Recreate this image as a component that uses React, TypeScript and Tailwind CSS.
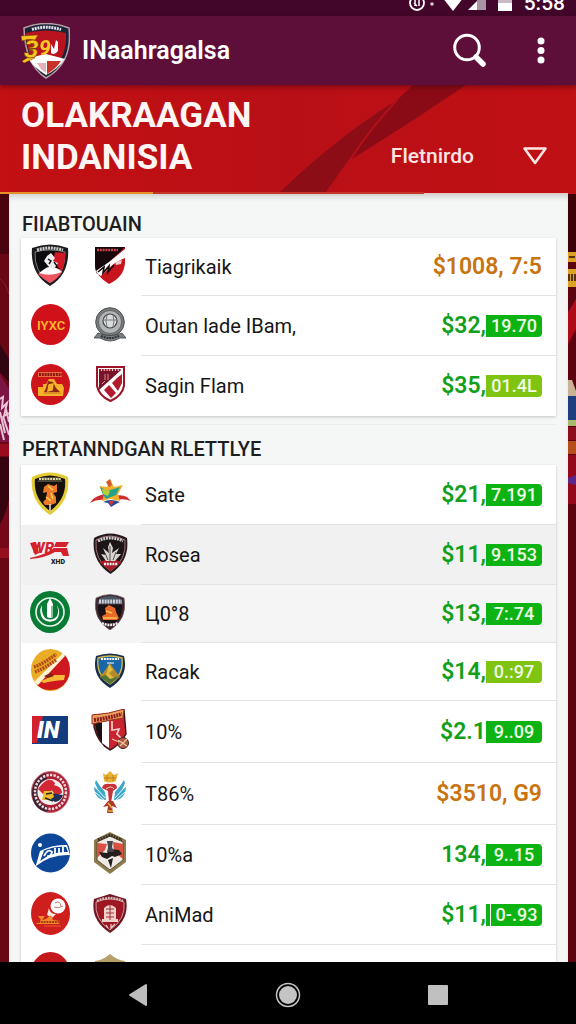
import type { ReactNode } from "react";

type Tone = "green" | "lime" | "orange";

type Row = {
  name: string;
  price: string;
  badge?: string;
  tone: Tone;
  bar?: boolean;
  height: string;
  shade?: string;
  left: ReactNode;
  right: ReactNode;
};

function Icon({ w, h, children }: { w: number; h: number; children: ReactNode }) {
  return (
    <svg width={w} height={h} viewBox={`0 0 ${w} ${h}`} className="shrink-0" aria-hidden="true">
      {children}
    </svg>
  );
}

function Lettering({ d, color, size = 3 }: { d: string; color: string; size?: number }) {
  return <path d={d} fill="none" stroke={color} strokeWidth={size} strokeDasharray="2 0.8" />;
}

const svgFont = "Roboto, sans-serif";

const fox = (
  <Icon w={38} h={42}>
    <path d="M1 4Q19-3 37 4Q39 30 19 42Q-1 30 1 4Z" fill="#1b1b1f" />
    <path d="M4 8Q19 4 34 8Q35 28 19 39Q3 28 4 8Z" fill="#0b0b0d" stroke="#aaa" strokeWidth=".7" />
    <path d="M24 8L34 9Q34 20 31 27L22 18Z" fill="#d01824" />
    <path d="M7 30Q12 26 17 25L25 24Q31 25 31 28Q27 35 19 39Q12 35 7 30Z" fill="#ef5560" />
    <path d="M12 26Q19 20 27 25L31 28Q19 33 8 29Z" fill="#fff" />
    <path d="M16 12L20 9L24 14L22 17L27 19L23 25L18 23L13 17Z" fill="#eee" />
    <path d="M17 15L20 17L18 20M23 18L26 22" stroke="#111" fill="none" strokeWidth="1.4" />
    <Lettering d="M6 6Q19 2 32 6" color="#ccc" size={3} />
  </Icon>
);

const slash = (
  <Icon w={30} h={38}>
    <path d="M0 1H30V17Q29 31 14 38Q1 30 0 20Z" fill="#c8141c" />
    <path d="M0 1H30L2 28Q0 24 0 20Z" fill="#17090b" />
    <path d="M30 3V12Q20 16 14 22L6 30Q2 28 1 25L14 16Z" fill="#fff" />
    <path d="M3 26L9 21L8 27L14 20L13 26L19 19" stroke="#17090b" strokeWidth="1.6" fill="none" />
    <path d="M20 16L27 14L26 18L21 19Z" fill="#f5c9cb" />
    <Lettering d="M2 4H23" color="#c9444b" size={2.5} />
  </Icon>
);

const redDisc = (
  <Icon w={39} h={41}>
    <ellipse cx="19.5" cy="20.5" rx="19.5" ry="20.5" fill="#d0111a" />
    <text x="6" y="26" fontFamily={svgFont} fontSize="13" fontWeight="600" fill="#fbb72a">IYXC</text>
  </Icon>
);

const globe = (
  <Icon w={32} h={35}>
    <circle cx="16" cy="15" r="14.3" fill="#777b7d" stroke="#4d5153" strokeWidth="1" />
    <circle cx="16" cy="15" r="11.5" fill="#b2b5b6" stroke="#555" strokeWidth=".8" />
    <circle cx="16" cy="14" r="7" fill="#d9dcdd" stroke="#444" strokeWidth="1.2" />
    <path d="M9 13H23M13 8Q11 14 13 20M19 8Q21 14 19 20" stroke="#777" strokeWidth="1" fill="none" />
    <path d="M0 31L4 26Q16 31 28 26L32 31L26 31Q16 37 6 31Z" fill="#7b7f81" stroke="#3d4042" strokeWidth=".8" />
    <Lettering d="M7 29Q16 33 25 29" color="#2e3031" size={2} />
  </Icon>
);

const temple = (
  <Icon w={39} h={41}>
    <ellipse cx="19.5" cy="20.5" rx="19.5" ry="20.5" fill="#cd141b" />
    <path d="M7 8H31V13H7Z" fill="#e8703d" />
    <Lettering d="M8 10.5H31" color="#8c1712" size={3} />
    <path d="M7 23H12V20H15L18 15H23L26 20H31L33 24L32 32H7Z" fill="#f6b12a" />
    <path d="M17 17L22 18L25 24L31 30H12L15 24Z" fill="#8d2816" />
    <path d="M8 26H13M26 24H31M9 29H31M18 21L22 20L21 26L17 27Z" stroke="#f7b12b" strokeWidth="1.5" fill="#f7b12b" />
  </Icon>
);

const stripes = (
  <Icon w={29} h={36}>
    <path d="M1 1H28V20Q26 30 14.500 35Q3 30 1 20Z" fill="#fff" stroke="#9d1527" strokeWidth="2" />
    <path d="M3 5H24L3 24Z" fill="#77142a" />
    <path d="M21 12L26 8V17L22 25L16 17ZM13 19L20 27L15 32L8 24Z" fill="#b21b2c" />
    <path d="M9 8V14M12 8V14M6 18L9 15" stroke="#d98b98" strokeWidth="1" />
    <Lettering d="M3 4H25" color="#9d1527" size={2} />
  </Icon>
);

const goldShield = (
  <Icon w={38} h={43}>
    <path d="M1 5Q19-4 37 5Q40 29 19 43Q-2 29 1 5Z" fill="#e3cc35" />
    <path d="M4 7Q19 0 34 7Q36 27 19 39Q2 27 4 7Z" fill="#15100d" />
    <path d="M6 10L10 5H28L32 10Z" fill="#4a4635" />
    <Lettering d="M8 7H30" color="#ddd5a0" size={2} />
    <path d="M13 15L17 12L23 14L26 12V20L22 21L25 25V31L20 33H14L12 30L15 27L16 20L12 21Z" fill="#ed7a2b" />
    <path d="M17 14L22 18M15 25L20 29M20 21L22 27" stroke="#f8d153" strokeWidth="1.6" />
    <path d="M19 32V39" stroke="#ddd" strokeWidth="1.6" />
  </Icon>
);

const star = (
  <Icon w={41} h={28}>
    <path d="M0 24L3 20Q10 15 18 15L14 21Q7 20 0 24ZM41 22L37 18Q31 15 25 17L27 21Q34 19 41 22Z" fill="#cf2b31" />
    <path d="M20 0L24 8L33 6L28 15L30 22L20 20L12 22L14 15L9 7L17 8Z" fill="#f1b02c" />
    <path d="M10 8L17 12L30 8L26 16L16 20L13 16Z" fill="#27a28a" />
    <path d="M12 10L20 12L18 17L13 15Z" fill="#bccc33" />
    <path d="M16 3L20 0L22 6L19 8Z" fill="#d6542c" />
    <path d="M13 23Q20 19 30 23L26 25L21 28L18 24Z" fill="#2b4b98" />
    <path d="M19 22L24 22L21 27Z" fill="#d4333a" />
  </Icon>
);

const wr = (
  <Icon w={40} h={28}>
    <text x="2" y="14" fontFamily={svgFont} fontSize="15" fontWeight="900" fontStyle="italic" fill="#d5212c">WR</text>
    <path d="M0 19Q15 16 24 9L37 9L39 17L33 17L31 13L25 13Q15 19 0 20Z" fill="#d5212c" />
    <path d="M0 4L6 3L9 14L5 16ZM26 3H39L36 8H24Z" fill="#d5212c" />
    <text x="21" y="25" fontFamily={svgFont} fontSize="7" fontWeight="900" fill="#1c1c1c">XHD</text>
  </Icon>
);

const leafShield = (
  <Icon w={35} h={41}>
    <path d="M1 5Q17-4 34 5Q37 28 17.500 41Q-2 28 1 5Z" fill="#241a1c" />
    <path d="M3 7Q17-1 32 7Q34 27 17.500 38Q1 27 3 7Z" fill="#1d1618" stroke="#a77077" strokeWidth="1" />
    <path d="M6 29Q17 24 29 29L17.500 38Z" fill="#a91c27" />
    <path d="M17 9L20 15L19 20L26 15L23 21L28 21L22 28H13L8 21L13 22L10 15L16 20L15 14Z" fill="#d9d6d0" />
    <path d="M17 13V28M12 20L15 27M23 19L20 27" stroke="#554d4c" strokeWidth="1" />
    <Lettering d="M5 8Q17 2 30 8" color="#ccc" size={3} />
    <Lettering d="M11 31H25" color="#eee" size={2.5} />
  </Icon>
);

const greenDisc = (
  <Icon w={40} h={42}>
    <ellipse cx="20" cy="21" rx="20" ry="21" fill="#087b35" />
    <circle cx="20" cy="21" r="14" fill="none" stroke="#e9f5ec" strokeWidth="1.6" />
    <path d="M12 14Q8 21 13 28Q19 33 26 29Q32 23 27 14Q30 24 25 27Q20 30 15 27Q11 22 12 14Z" fill="#fff" />
    <path d="M20 7L23 13V26Q20 28 17 26V13Z" fill="#fff" />
    <path d="M22 15V26" stroke="#2f9b57" strokeWidth="1.2" />
  </Icon>
);

const darkCrest = (
  <Icon w={30} h={36}>
    <path d="M1 4Q15-3 29 4Q33 25 15 36Q-3 25 1 4Z" fill="#3b252c" stroke="#795d64" strokeWidth=".7" />
    <path d="M3 11H27Q28 22 20 29H10Q2 22 3 11Z" fill="#181115" />
    <path d="M5 4Q15 0 25 4L28 10H2Z" fill="#4b5563" />
    <Lettering d="M4 7.500H27" color="#cbd0d7" size={4} />
    <path d="M10 14L14 11L20 14L21 18L24 24L22 26H8L7 22L11 20Z" fill="#e96a28" />
    <path d="M11 17L17 19M8 24H22" stroke="#f9c14e" strokeWidth="1.5" />
    <Lettering d="M7 29Q15 33 23 29" color="#eee" size={2.5} />
  </Icon>
);

const splitDisc = (
  <Icon w={39} h={42}>
    <ellipse cx="19.500" cy="21" rx="19.500" ry="21" fill="#e9ad26" />
    <path d="M6 36L34 6Q41 15 38 27Q33 41 19 41Q11 41 6 36Z" fill="#cf1720" />
    <path d="M3 33L32 4L34 7L7 36Z" fill="#fff4d2" />
    <Lettering d="M3 18Q14 14 25 5M4 23Q14 19 25 11" color="#b44b1b" size={3.5} />
    <path d="M9 32Q17 30 20 26H34L33 31Q20 32 13 34Z" fill="#f8ba36" />
    <path d="M13 27L20 24L23 27L17 29Z" fill="#7c2215" />
  </Icon>
);

const mountain = (
  <Icon w={30} h={35}>
    <path d="M1 3Q15-2 29 3Q34 24 15 35Q-4 24 1 3Z" fill="#17304d" />
    <path d="M3 5Q15 1 27 5Q29 22 15 31Q1 22 3 5Z" fill="#1967a8" stroke="#d5b54c" strokeWidth="1.4" />
    <path d="M15 10L19 16L25 24L15 31L5 24L11 16Z" fill="#b58a2a" />
    <path d="M14 11L18 17L14 20L20 26L9 27L12 19Z" fill="#e0bd3e" />
    <path d="M5 24L11 22L15 26L25 23L15 31Z" fill="#547435" />
    <Lettering d="M6 6H24" color="#fff" size={2} />
    <path d="M12 10H19" stroke="#fff" strokeWidth="1" />
  </Icon>
);

const inLogo = (
  <Icon w={36} h={28}>
    <path d="M0 0H36V28H0Z" fill="#123c7c" />
    <path d="M0 0H11L5 27H0Z" fill="#d3202d" />
    <text x="5" y="22" fontFamily={svgFont} fontSize="23" fontWeight="900" fontStyle="italic" fill="#fff">IN</text>
  </Icon>
);

const bannerShield = (
  <Icon w={38} h={42}>
    <path d="M3 6Q19 6 33 1L35 25Q29 36 19 41Q7 34 3 18Z" fill="#c8232e" stroke="#35151a" strokeWidth="1.4" />
    <path d="M4 14H11V33Q5 26 4 14Z" fill="#181214" />
    <path d="M11 13L18 12V39L11 34Z" fill="#fff" />
    <path d="M1 6Q18 5 33 0L32 9Q18 11 1 15Z" fill="#eaa15c" stroke="#9f2e22" strokeWidth="1" />
    <Lettering d="M3 11Q18 9 31 5" color="#8e1d20" size={4} />
    <path d="M21 12V22M22 21L28 20L26 25L30 29" stroke="#f1d1c9" strokeWidth="1.700" fill="none" />
    <circle cx="32" cy="34" r="5.500" fill="#a85c42" stroke="#4a201b" />
    <path d="M27 31L36 37M36 30L29 37M21 30L28 33" stroke="#efc6a1" strokeWidth="1.2" />
  </Icon>
);

const ringDisc = (
  <Icon w={39} h={42}>
    <ellipse cx="19.500" cy="21" rx="19" ry="20.500" fill="#a92035" stroke="#c9686f" strokeWidth="1" />
    <path d="M1 21Q2 7 14 2L16 8Q6 12 6 21Q6 33 17 36L16 41Q1 38 1 21Z" fill="#3c2433" />
    <ellipse cx="19.500" cy="21" rx="15.500" ry="17" fill="none" stroke="#f3d9dc" strokeWidth="2.500" strokeDasharray="2.300 1.300" />
    <circle cx="19.500" cy="21" r="13" fill="#f4f0ed" />
    <path d="M11 13Q19 5 24 12L22 19L12 23L7 18Z" fill="#d32735" />
    <path d="M22 14Q31 15 31 22L25 25L20 18Z" fill="#d32735" />
    <path d="M20 22L32 24Q30 30 24 31L18 27Z" fill="#1f3154" />
    <path d="M13 20H21L23 26L18 29H11Z" fill="#eebc2b" />
    <path d="M15 23L21 22M14 27L22 30" stroke="#1f2530" strokeWidth="1.500" />
  </Icon>
);

const torch = (
  <Icon w={32} h={42}>
    <path d="M9 2L12 4L16 0L20 4L24 2L22 10Q16 13 10 10Z" fill="#e9b436" />
    <path d="M10 7H22M13 4V10M19 4V10" stroke="#bb7c20" strokeWidth="1" />
    <path d="M2 9L6 15L11 21L12 29Q1 29 0 16L4 19L1 12ZM30 9L26 15L21 21L20 29Q31 29 32 16L28 19L31 12Z" fill="#3fa7c9" />
    <path d="M2 17L11 27M1 21L10 29M30 17L21 27M31 21L22 29" stroke="#e9f8fa" strokeWidth="1" />
    <path d="M8 17Q9 12 16 13Q23 12 23 17L19 20L17 32H15L14 20Z" fill="#c8333b" />
    <path d="M12 18Q17 14 20 18" stroke="#f4dbbd" fill="none" />
    <path d="M14 30L9 36L14 35L13 42H19L18 35L23 37L19 30Z" fill="#a93a2b" />
    <path d="M14 32L18 37M14 40H19" stroke="#e7b13c" strokeWidth="1.700" />
  </Icon>
);

const blueDisc = (
  <Icon w={39} h={40}>
    <circle cx="19.500" cy="20" r="19.500" fill="#0c4798" />
    <path d="M5 32L9 18Q22 11 36 12L39 22Q20 21 5 33Z" fill="#fff" />
    <path d="M9 28L12 18Q24 13 35 14L37 19Q22 18 9 28Z" fill="#0c4798" />
    <path d="M8 28L12 18M13 23Q17 15 21 19Q20 24 16 23M24 15V21H28V15M32 14V20" stroke="#fff" strokeWidth="1.800" fill="none" />
    <circle cx="9" cy="12" r="2" fill="#fff" />
  </Icon>
);

const goldHex = (
  <Icon w={34} h={42}>
    <path d="M1 8L17 0L33 8V30L17 42L1 30Z" fill="#8d7b4d" />
    <path d="M4 10L17 4L30 10V28L17 38L4 28Z" fill="#efe9e4" stroke="#463b2a" strokeWidth=".8" />
    <path d="M4 11L14 12L12 18L4 26ZM20 10L30 12V27L21 20Z" fill="#d85143" />
    <path d="M6 20L14 21L17 17L26 18L29 22L22 25L19 24L14 27L9 25Z" fill="#241d20" />
    <path d="M14 9H20L19 15L21 20H14L15 15Z" fill="#45464b" />
    <path d="M15 28L20 26L18 36Z" fill="#241d20" />
    <Lettering d="M5 8L17 3L29 8" color="#383026" size={3} />
  </Icon>
);

const riderDisc = (
  <Icon w={39} h={43}>
    <ellipse cx="19.500" cy="21.500" rx="19.500" ry="21.500" fill="#cf1f1d" />
    <circle cx="27" cy="14" r="7.500" fill="#fff" />
    <path d="M24 11Q29 8 30 14M23 15Q27 17 32 14" stroke="#c97b71" strokeWidth="1" fill="none" />
    <path d="M18 16Q19 22 25 22L21 26L16 23Z" fill="#fbe9df" />
    <path d="M7 24H14L11 28L15 27L20 23L22 28L29 29L28 32H5L10 28Z" fill="#ef8b2a" />
    <Lettering d="M7 30H29" color="#a93b13" size={2} />
    <path d="M13 34H30" stroke="#e65d34" strokeWidth="1" />
  </Icon>
);

const tower = (
  <Icon w={34} h={39}>
    <path d="M1 5L17 0L33 5Q37 26 17 39Q-3 26 1 5Z" fill="#6f1420" />
    <path d="M3 8Q17 2 31 8Q33 25 17 36Q1 25 3 8Z" fill="#9d1724" stroke="#cf9d9d" strokeWidth="1" />
    <Lettering d="M4 7Q17 1 30 7" color="#d7b9b2" size={2.500} />
    <path d="M11 14Q17 8 23 14V25H25V28H9V25H11Z" fill="#f2d1c9" />
    <path d="M13 15H21M13 19H21M13 23H21M17 11V26" stroke="#a1303a" strokeWidth="1" />
    <path d="M13 31L15 34M18 30V34L22 30" stroke="#efd8d5" strokeWidth="1.200" fill="none" />
  </Icon>
);

const lastDisc = (
  <Icon w={39} h={42}>
    <ellipse cx="19.500" cy="21" rx="19.500" ry="21" fill="#c3191c" />
  </Icon>
);

const lastShield = (
  <Icon w={32} h={38}>
    <path d="M1 7Q9 6 16 0Q23 6 31 7Q33 27 16 38Q-1 27 1 7Z" fill="#b5a06c" />
  </Icon>
);

const featured: Row[] = [
  { name: "Tiagrikaik", price: "$1008, 7:5", tone: "orange", height: "h-[58px]", left: fox, right: slash },
  { name: "Outan lade IBam,", price: "$32,", badge: "19.70", tone: "green", height: "h-[60px]", left: redDisc, right: globe },
  { name: "Sagin Flam", price: "$35,", badge: "01.4L", tone: "lime", height: "h-[60px]", left: temple, right: stripes },
];

const matches: Row[] = [
  { name: "Sate", price: "$21,", badge: "7.191", tone: "green", height: "h-[60px]", left: goldShield, right: star },
  { name: "Rosea", price: "$11,", badge: "9.153", tone: "green", height: "h-[60px]", shade: "bg-[#f1f1f1]", left: wr, right: leafShield },
  { name: "Ц0°8", price: "$13,", badge: "7:.74", tone: "green", height: "h-[58px]", shade: "bg-[#f5f5f5]", left: greenDisc, right: darkCrest },
  { name: "Racak", price: "$14,", badge: "0.:97", tone: "lime", height: "h-[58px]", left: splitDisc, right: mountain },
  { name: "10%", price: "$2.1", badge: "9..09", tone: "green", height: "h-[62px]", left: inLogo, right: bannerShield },
  { name: "T86%", price: "$3510, G9", tone: "orange", height: "h-[62px]", left: ringDisc, right: torch },
  { name: "10%a", price: "134,", badge: "9..15", tone: "green", height: "h-[60px]", left: blueDisc, right: goldHex },
  { name: "AniMad", price: "$11,", badge: "0-.93", tone: "green", bar: true, height: "h-[60px]", left: riderDisc, right: tower },
  { name: "", price: "", tone: "green", height: "h-[60px]", left: lastDisc, right: lastShield },
];

function RowItem({ row }: { row: Row }) {
  const badgeColor = row.tone === "lime" ? "bg-[#7fc411]" : "bg-[#0cb312]";
  const priceColor = row.tone === "orange" ? "text-[#c9730f]" : "text-[#12a01c]";
  return (
    <li className={`flex shrink-0 ${row.height} ${row.shade ?? ""}`}>
      <div className="flex w-[58px] shrink-0 items-center justify-center pb-1">{row.left}</div>
      <div className="flex w-[62px] shrink-0 items-center justify-center pb-1">{row.right}</div>
      <div className="flex min-w-0 flex-1 items-center justify-between border-b border-[#e1e3e4] pr-[14px] pl-1">
        <span className="truncate text-xl text-[#161616]">{row.name}</span>
        <span className={`flex items-center text-[23px] leading-8 font-semibold ${priceColor}`}>
          {row.price}
          {row.bar && <span className="mr-px h-[22px] w-1 bg-[#0cb312]" />}
          {row.badge && (
            <span
              className={`flex h-[22px] items-center justify-center rounded-r text-lg font-medium text-[#effbe6] ${badgeColor} ${
                row.bar ? "w-[51px]" : "w-14"
              }`}
            >
              {row.badge}
            </span>
          )}
        </span>
      </div>
    </li>
  );
}

function LeftBackdrop() {
  return (
    <svg className="h-full w-[9px] shrink-0" viewBox="0 0 9 768" preserveAspectRatio="xMidYMin slice" aria-hidden="true">
      <path d="M0 0H9V768H0Z" fill="#6a0714" />
      <path d="M0 0H9V60H0Z" fill="#4a0410" />
      <path d="M0 85Q5 88 9 100" stroke="#901a28" fill="none" />
      <path d="M0 150L9 165V188L0 178Z" fill="#300611" />
      <path d="M0 180L9 195V248H0Z" fill="#7b1546" />
      <path d="M0 205L3 203L2 214L7 209L4 222L9 219M0 218L5 239M3 222L9 241M0 230L4 246M6 215L9 228" stroke="#e9c4d4" strokeWidth="2" fill="none" />
      <path d="M0 250H9V262H0Z" fill="#9a0b20" />
      <path d="M0 263H9V335H0Z" fill="#35040f" />
      <path d="M0 330Q6 320 9 305V355H0Z" fill="#740818" />
      <path d="M0 354H9V364H0Z" fill="#94101e" />
    </svg>
  );
}

function RightBackdrop() {
  return (
    <svg className="h-full w-2 shrink-0" viewBox="0 0 8 768" preserveAspectRatio="xMidYMin slice" aria-hidden="true">
      <path d="M0 0H8V768H0Z" fill="#5c0310" />
      <path d="M0 0H8V58H0Z" fill="#3c0207" />
      <path d="M0 58H8V68H0ZM0 75H8V93H0Z" fill="#dca127" />
      <path d="M1 63H7M1 80V87M4 80V87M7 80V87" stroke="#56300c" strokeWidth="2" />
      <path d="M0 118L8 105V135L0 150Z" fill="#ae0b18" />
      <path d="M0 186L4 186L8 197V202H0Z" fill="#c9b394" />
      <path d="M0 202H8V226H0Z" fill="#1f3e7d" />
      <path d="M0 226H8V232H0Z" fill="#a9b86d" />
      <path d="M0 233H8V246H0Z" fill="#8c0d1d" />
      <path d="M0 247H8V260H0Z" fill="#b64d1c" />
      <path d="M0 261H8V310H0Z" fill="#94081c" />
      <path d="M0 284L8 281V291L0 289Z" fill="#5a2689" />
    </svg>
  );
}

export default function App() {
  return (
    <div className="flex h-screen flex-col overflow-hidden bg-[#5c0310] font-[Roboto,sans-serif]">
      <div className="flex h-4 shrink-0 items-end justify-end overflow-hidden bg-[#41062a] pr-[11px] pb-[3px] text-white">
        <svg width="105" height="20" viewBox="0 0 105 20" className="mr-[10px] shrink-0" aria-hidden="true">
          <circle cx="8" cy="10" r="7" fill="none" stroke="#fff" strokeWidth="1.800" />
          <path d="M6 6V13M10 6V13M5 10L8 13" stroke="#fff" strokeWidth="1.500" fill="none" />
          <circle cx="23" cy="11" r="1.800" fill="#d9c6d3" />
          <path d="M33 4Q44-1 55 4L44 18Z" fill="#fff" />
          <path d="M68 0H77V17H68Z" fill="#a894a2" />
          <path d="M68 8V17H59Z" fill="#fff" />
          <path d="M89 2H103V18H89Z" fill="#fff" />
          <path d="M89 2H103V10H89Z" fill="#cbb9c5" />
        </svg>
        <span className="text-[21px] leading-5 font-medium">5:58</span>
      </div>

      <header className="z-10 flex h-[69px] shrink-0 items-center bg-[#5d0e39] pr-[25px] pl-5 text-white shadow-[0_2px_5px_rgba(60,0,20,0.5)]">
        <svg width="50" height="56" viewBox="0 0 50 56" className="shrink-0" aria-hidden="true">
          <path d="M4 5Q26-4 49 5Q53 40 26 55Q5 42 4 5Z" fill="#1d2437" stroke="#b5a0a6" strokeWidth="1.500" />
          <path d="M6 10Q26 5 46 10Q48 36 26 52Q7 38 6 10Z" fill="#b9131f" />
          <path d="M8 35L26 31L45 36Q38 46 26 52Q12 43 8 35Z" fill="#fff" />
          <path d="M27 38H41Q36 46 27 51Z" fill="#c83228" />
          <path d="M17 40H26V50Q20 46 17 40Z" fill="#e4b2b7" />
          <path d="M31 30V21L34 26L36 17L38 19V28Q34 33 31 30Z" fill="#fff" />
          <Lettering d="M12 6.500Q26 2 41 6.500" color="#dfe3eb" size={3} />
          <path d="M1 13L18 12L15 17Q8 15 2 18ZM2 38L12 32L15 35L4 40Z" fill="#f7c71d" stroke="#7b3710" strokeWidth=".5" />
          <text x="4" y="35" fontFamily={svgFont} fontSize="26" fontWeight="900" fontStyle="italic" fill="#f7c71d" stroke="#7b3710" strokeWidth=".7">3</text>
          <text x="19" y="32" fontFamily={svgFont} fontSize="21" fontWeight="700" fontStyle="italic" fill="#fbc927">9</text>
        </svg>
        <span className="ml-3 flex-1 text-[25px] font-semibold">INaahragalsa</span>
        <button type="button" aria-label="Search" className="flex h-10 w-10 items-center justify-center">
          <svg width="34" height="36" viewBox="0 0 34 36" aria-hidden="true">
            <circle cx="14" cy="14.500" r="12.300" fill="none" stroke="#fff" strokeWidth="3" />
            <path d="M23 24L30 31" stroke="#fff" strokeWidth="5.500" strokeLinecap="round" />
          </svg>
        </button>
        <button type="button" aria-label="More options" className="ml-[41px] flex h-10 w-5 items-center justify-center">
          <svg width="8" height="28" viewBox="0 0 8 28" aria-hidden="true" fill="#fff">
            <circle cx="4" cy="4" r="3.500" />
            <circle cx="4" cy="13.500" r="3.500" />
            <circle cx="4" cy="23" r="3.500" />
          </svg>
        </button>
      </header>

      <section className="relative flex h-[109px] shrink-0 items-start justify-between bg-gradient-to-r from-[#c21013] via-[#b80f16] to-[#bf1014] pr-7 pl-[21px] text-white">
        <svg className="absolute inset-y-0 right-0 h-full w-[576px]" viewBox="0 0 576 109" aria-hidden="true">
          <path d="M413 0H466L418 32L352 74L370 46L396 16Z" fill="#8a0b15" />
          <path d="M397 15Q360 38 326 66Q304 84 280 107H326L352 70Q370 44 397 15Z" fill="#8d0d17" />
          <path d="M397 15Q370 44 352 72" stroke="#b01019" strokeWidth="2" fill="none" />
          <path d="M0 107H424V109H0Z" fill="#c5352a" />
          <path d="M0 107H153V109H0Z" fill="#e6902a" />
          <path d="M424 108H568V109H424Z" fill="#ecc9c9" />
        </svg>
        <h1 className="relative pt-[10px] text-[35px] leading-[42px] font-bold text-[#fff5f3]">
          OLAKRAAGAN
          <br />
          INDANISIA
        </h1>
        <button type="button" className="relative mt-[57px] flex items-center text-[21px] leading-7 font-medium text-[#ffe5e2]">
          Fletnirdo
          <svg width="26" height="20" viewBox="0 0 26 20" className="ml-12" aria-hidden="true">
            <path d="M2.500 2.500H23.500L13 17Z" fill="none" stroke="#ffe5e2" strokeWidth="2.500" strokeLinejoin="round" />
          </svg>
        </button>
      </section>

      <div className="flex min-h-0 flex-1">
        <LeftBackdrop />
        <main className="min-w-0 flex-1 overflow-hidden bg-[#f5f6f6] px-3 shadow-[inset_0_5px_6px_-3px_rgba(0,0,0,0.2)]">
          <h2 className="pt-4 pl-px text-xl leading-7 font-medium text-[#1d1d1f]">FIIABTOUAIN</h2>
          <ul className="flex flex-col bg-white shadow-[0_1px_3px_rgba(0,0,0,0.2)] [&>li:last-child>div]:border-b-0">
            {featured.map((row) => (
              <RowItem key={row.name} row={row} />
            ))}
          </ul>
          <h2 className="mt-2 border-t border-[#eceded] pt-[10px] pb-[2px] pl-px text-xl leading-7 font-medium text-[#1d1d1f]">
            PERTANNDGAN RLETTLYE
          </h2>
          <ul className="flex flex-col bg-white shadow-[0_1px_3px_rgba(0,0,0,0.2)]">
            {matches.map((row) => (
              <RowItem key={row.name} row={row} />
            ))}
          </ul>
        </main>
        <RightBackdrop />
      </div>

      <nav className="z-10 flex h-[62px] shrink-0 items-center justify-center bg-black pt-1" aria-label="System navigation">
        <button type="button" aria-label="Back" className="flex h-12 w-[150px] items-center justify-center">
          <svg width="20" height="24" viewBox="0 0 20 24" aria-hidden="true">
            <path d="M2 12L18 2V22Z" fill="#bdbdbd" stroke="#bdbdbd" strokeWidth="2" strokeLinejoin="round" />
          </svg>
        </button>
        <button type="button" aria-label="Home" className="flex h-12 w-[150px] items-center justify-center">
          <svg width="26" height="26" viewBox="0 0 26 26" aria-hidden="true">
            <circle cx="13" cy="13" r="11.500" fill="none" stroke="#c4c4c4" strokeWidth="1.500" />
            <circle cx="13" cy="13" r="9" fill="#c4c4c4" />
          </svg>
        </button>
        <button type="button" aria-label="Recent apps" className="flex h-12 w-[150px] items-center justify-center">
          <span className="h-5 w-5 rounded-[1px] bg-[#c0c0c0]" />
        </button>
      </nav>
    </div>
  );
}
